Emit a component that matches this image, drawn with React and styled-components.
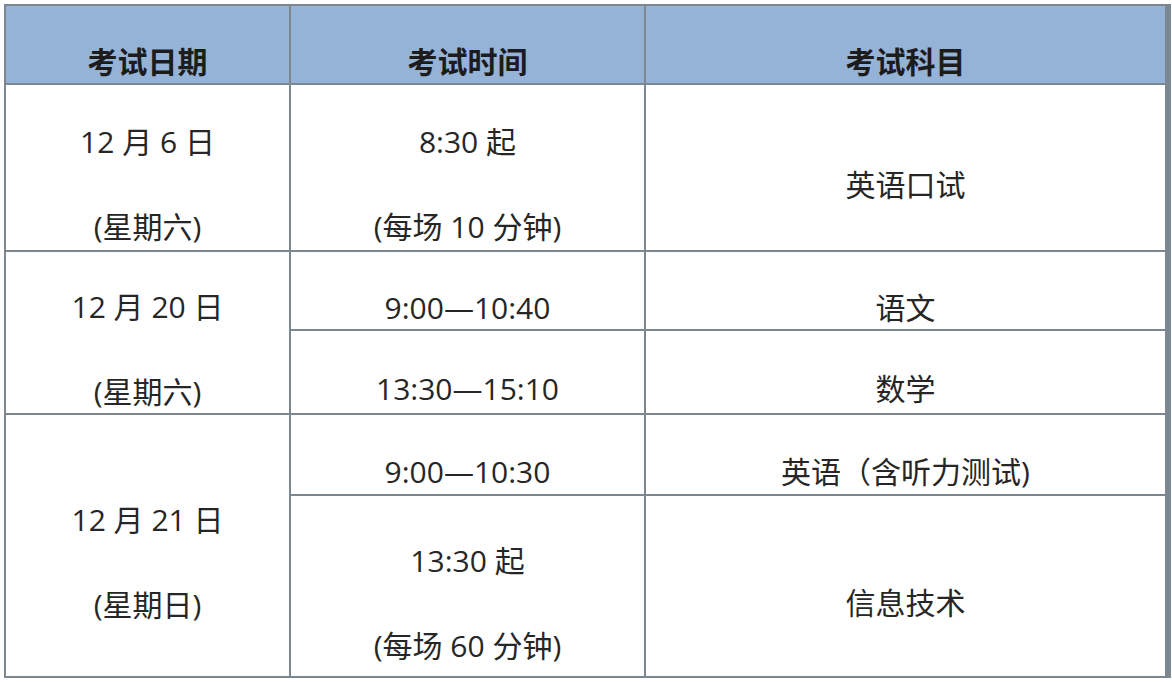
import React from "react";
import styled, { createGlobalStyle } from "styled-components";

const Global = createGlobalStyle`
  html, body { margin: 0; padding: 0; background: #ffffff; }
  body { font-family: "Open Sans", "Noto Sans CJK SC", sans-serif; }
`;

const Page = styled.div`
  width: 1172px;
  height: 682px;
  padding: 4px 0 0 4px;
  box-sizing: border-box;
  background: #ffffff;
`;

const Table = styled.div`
  display: grid;
  width: 1163px;
  grid-template-columns: 283px 353px 519px;
  grid-template-rows: 77px 165px 77px 82px 79px 180px;
  gap: 2px;
  border: 2px solid #7d8790;
  background: #7d8790;
`;

const Cell = styled.div`
  display: flex;
  flex-direction: column;
  align-items: center;
  justify-content: center;
  padding-top: 34px;
  box-sizing: border-box;
  background: ${(p) => (p.$head ? "#95b3d7" : "#ffffff")};
  grid-column: ${(p) => p.$col};
  grid-row: ${(p) => p.$row};
  color: ${(p) => (p.$head ? "#1c1c1c" : "#262626")};
  font-family: "Open Sans", "Noto Sans CJK SC", sans-serif;
  font-size: 30px;
  font-weight: ${(p) => (p.$head ? 700 : 400)};
`;

const Line = styled.div`
  line-height: 40px;
  white-space: pre;
  & + & { margin-top: 45px; }
`;

const rows = [
  { col: 1, row: "2", lines: ["12 月 6 日", "(星期六)"] },
  { col: 2, row: "2", lines: ["8:30 起", "(每场 10 分钟)"] },
  { col: 3, row: "2", lines: ["英语口试"] },
  { col: 1, row: "3 / span 2", lines: ["12 月 20 日", "(星期六)"] },
  { col: 2, row: "3", lines: ["9:00—10:40"] },
  { col: 3, row: "3", lines: ["语文"] },
  { col: 2, row: "4", lines: ["13:30—15:10"] },
  { col: 3, row: "4", lines: ["数学"] },
  { col: 1, row: "5 / span 2", lines: ["12 月 21 日", "(星期日)"] },
  { col: 2, row: "5", lines: ["9:00—10:30"] },
  { col: 3, row: "5", lines: ["英语（含听力测试)"] },
  { col: 2, row: "6", lines: ["13:30 起", "(每场 60 分钟)"] },
  { col: 3, row: "6", lines: ["信息技术"] },
];

export default function App() {
  return (
    <Page>
      <Global />
      <Table>
        <Cell $head $col={1} $row="1"><Line>考试日期</Line></Cell>
        <Cell $head $col={2} $row="1"><Line>考试时间</Line></Cell>
        <Cell $head $col={3} $row="1"><Line>考试科目</Line></Cell>
        {rows.map((r, i) => (
          <Cell key={i} $col={r.col} $row={r.row}>
            {r.lines.map((l, j) => (
              <Line key={j}>{l}</Line>
            ))}
          </Cell>
        ))}
      </Table>
    </Page>
  );
}
